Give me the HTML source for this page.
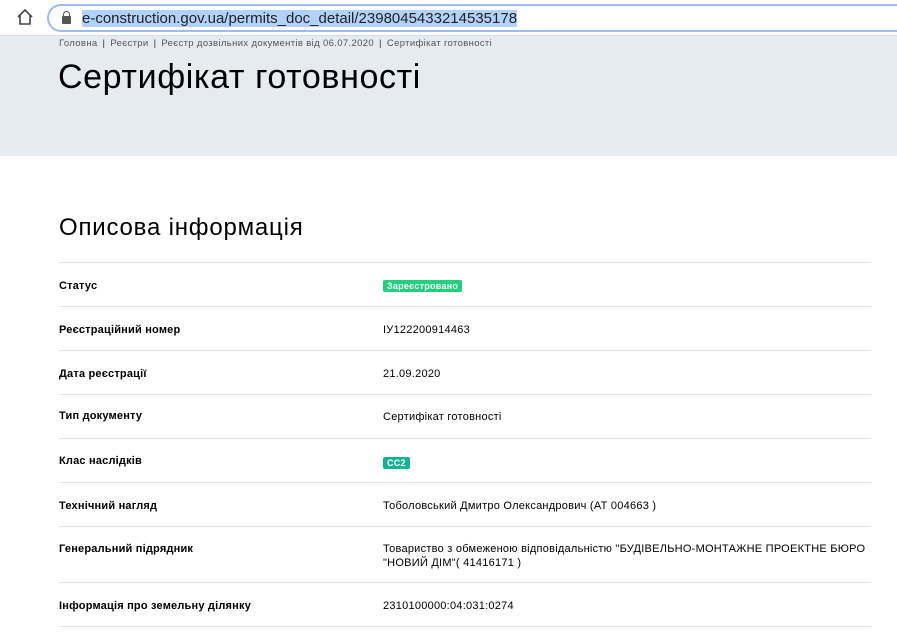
<!DOCTYPE html>
<html><head><meta charset="utf-8"><style>
*{margin:0;padding:0;box-sizing:border-box}
body{width:897px;height:642px;overflow:hidden;background:#fff;font-family:"Liberation Sans",sans-serif;color:#000;position:relative}
.bar{position:absolute;left:0;top:0;width:897px;height:36px;background:#fff;border-bottom:1px solid #ddd}
.url{position:absolute;left:47px;top:4px;width:870px;height:28px;border:2px solid #9cbcec;border-radius:14px;background:#fff}
.url span{position:absolute;left:33px;top:4px;font-size:15px;color:#222;background:#b3d2fb;line-height:17px}
.lock{position:absolute;left:13px;top:10px;width:9px;height:8px;background:#555;border-radius:1px}
.lock:before{content:"";position:absolute;left:1px;top:-5px;width:5px;height:6px;border:1.5px solid #555;border-bottom:none;border-radius:4px 4px 0 0}
.head{position:absolute;left:0;top:36px;width:897px;height:120px;background:#e6ebf0}
.crumb{position:absolute;left:59px;top:2px;font-size:9.5px;color:#555;letter-spacing:0.35px}
.crumb b{font-weight:normal;color:#333;margin:0 5px}
h1{position:absolute;left:58px;top:22px;font-size:34px;font-weight:normal;letter-spacing:0.6px}
h2{position:absolute;left:59px;top:214px;font-size:24px;font-weight:normal;letter-spacing:0.8px}
.row{position:absolute;left:59px;width:812px;border-top:1px solid #e4e4e4}
.row .l{position:absolute;left:0;font-size:11px;font-weight:bold;letter-spacing:0.2px}
.row .v{position:absolute;left:324px;font-size:11px;line-height:14px;letter-spacing:0.25px}
.tag{display:inline-block;color:#fff;font-size:9px;font-weight:bold;padding:1px 4px;border-radius:2px;line-height:10px}
</style></head><body>
<div class="bar">
<svg style="position:absolute;left:16px;top:8px" width="18" height="18" viewBox="0 0 18 18"><path d="M2 9 L9 2 L16 9 M4 7 V16 H14 V7" fill="none" stroke="#444" stroke-width="1.6"/></svg>
<div class="url"><div class="lock"></div><span>e-construction.gov.ua/permits_doc_detail/2398045433214535178</span></div>
</div>
<div class="head">
<div class="crumb">Головна<b>|</b>Реєстри<b>|</b>Реєстр дозвільних документів від 06.07.2020<b>|</b>Сертифікат готовності</div>
<h1>Сертифікат готовності</h1>
</div>
<h2>Описова інформація</h2>
<div class="row" style="top:262px;height:44px"><div class="l" style="top:17px">Статус</div><div class="v" style="top:16px"><span class="tag" style="background:#1fd07c">Зареєстровано</span></div></div>
<div class="row" style="top:306px;height:44px"><div class="l" style="top:17px">Реєстраційний номер</div><div class="v" style="top:16px">ІУ122200914463</div></div>
<div class="row" style="top:350px;height:44px"><div class="l" style="top:17px">Дата реєстрації</div><div class="v" style="top:16px">21.09.2020</div></div>
<div class="row" style="top:394px;height:44px"><div class="l" style="top:15px">Тип документу</div><div class="v" style="top:15px">Сертифікат готовності</div></div>
<div class="row" style="top:438px;height:44px"><div class="l" style="top:16px">Клас наслідків</div><div class="v" style="top:17px"><span class="tag" style="background:#13b495">СС2</span></div></div>
<div class="row" style="top:482px;height:44px"><div class="l" style="top:17px">Технічний нагляд</div><div class="v" style="top:16px">Тоболовський Дмитро Олександрович (АТ 004663 )</div></div>
<div class="row" style="top:526px;height:56px"><div class="l" style="top:16px">Генеральний підрядник</div><div class="v" style="top:15px">Товариство з обмеженою відповідальністю "БУДІВЕЛЬНО-МОНТАЖНЕ ПРОЕКТНЕ БЮРО<br>"НОВИЙ ДІМ"( 41416171 )</div></div>
<div class="row" style="top:582px;height:44px"><div class="l" style="top:17px">Інформація про земельну ділянку</div><div class="v" style="top:16px">2310100000:04:031:0274</div></div>
<div class="row" style="top:626px;height:16px"></div>
</body></html>
